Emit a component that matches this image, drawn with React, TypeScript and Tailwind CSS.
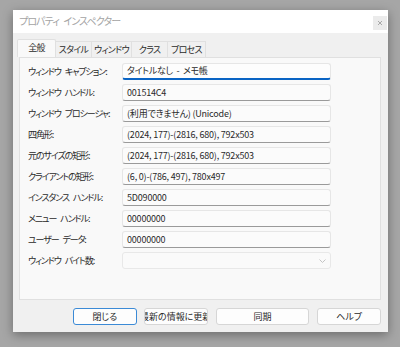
import React from "react";

const rows: { label: string; value: string; focus?: boolean; combo?: boolean }[] = [
  { label: "ウィンドウ キャプション:", value: "タイトルなし - メモ帳", focus: true },
  { label: "ウィンドウ ハンドル:", value: "001514C4" },
  { label: "ウィンドウ プロシージャ:", value: "(利用できません) (Unicode)" },
  { label: "四角形:", value: "(2024, 177)-(2816, 680), 792x503" },
  { label: "元のサイズの矩形:", value: "(2024, 177)-(2816, 680), 792x503" },
  { label: "クライアントの矩形:", value: "(6, 0)-(786, 497), 780x497" },
  { label: "インスタンス ハンドル:", value: "5D090000" },
  { label: "メニュー ハンドル:", value: "00000000" },
  { label: "ユーザー データ:", value: "00000000" },
  { label: "ウィンドウ バイト数:", value: "", combo: true },
];

const font = "font-['Noto_Sans_CJK_JP','Noto_Sans',sans-serif] [font-feature-settings:'palt']";

export default function App() {
  return (
    <div className={`w-[400px] h-[347px] bg-[#a6a6a6] pt-[10px] pl-[13px] overflow-hidden ${font}`}>
      <div className="w-[375px] h-[322px] bg-[#f0f0f0] flex flex-col shadow-[0_3px_10px_rgba(0,0,0,0.35)]">
        {/* title bar */}
        <div className="h-[23px] bg-white flex items-start">
          <div className="flex-1 pl-[6px] pt-[5px] text-[10px] leading-[12px] tracking-[-0.9px] [word-spacing:3px] text-[#a3a3a3]">
            プロパティ インスペクター
          </div>
          <div className="mt-[6px] mr-[1px] w-[14px] h-[14px] bg-[#ebebeb] flex items-center justify-center">
            <svg width="6" height="6" viewBox="0 0 6 6">
              <path d="M1 1L5 5M5 1L1 5" stroke="#a8a8a8" strokeWidth="1" />
            </svg>
          </div>
        </div>

        {/* body */}
        <div className="flex-1 flex flex-col pt-[8px] pl-[6px] pr-[7px] pb-[7px]">
          {/* tabs */}
          <div className="flex items-end h-[16px] ml-[-2px] relative z-10 text-[9px] tracking-[-0.7px] text-[#2a2a2a]">
            <div className="w-[39px] h-[18px] bg-[#f9f9f9] border border-b-0 border-[#e0e0e0] rounded-t-[2px] flex items-center justify-center pb-[1px]">
              全般
            </div>
            <div className="w-[36px] h-[16px] border-t border-r border-[#e0e0e0] flex items-center justify-center">
              スタイル
            </div>
            <div className="w-[40px] h-[16px] border-t border-r border-[#e0e0e0] flex items-center justify-center">
              ウィンドウ
            </div>
            <div className="w-[36px] h-[16px] border-t border-r border-[#e0e0e0] flex items-center justify-center">
              クラス
            </div>
            <div className="w-[38px] h-[16px] border-t border-r border-[#e0e0e0] flex items-center justify-center">
              プロセス
            </div>
          </div>

          {/* panel */}
          <div className="h-[243px] bg-[#f9f9f9] border border-[#e0e0e0] pt-[5px] pl-[8px]">
            {rows.map((r, i) => (
              <div key={i} className="flex items-center h-[17px] mb-[4px] text-[9px] text-[#2a2a2a]">
                <div className="w-[94px] whitespace-nowrap tracking-[-1.1px] [word-spacing:3px]">{r.label}</div>
                {r.combo ? (
                  <div className="w-[209px] h-[17px] bg-[#fafafa] border border-[#e8e8e8] rounded-[3px] flex items-center justify-end pr-[4px]">
                    <svg width="7" height="4" viewBox="0 0 7 4">
                      <path d="M0.5 0.5L3.5 3.5L6.5 0.5" stroke="#c4c4c4" fill="none" strokeWidth="1" />
                    </svg>
                  </div>
                ) : (
                  <div
                    className={
                      r.focus
                        ? "w-[209px] h-[17px] bg-[#fdfdfd] border border-[#e6e6e6] border-b-[2px] border-b-[#0a64c4] rounded-[3px] flex items-center px-[4px] whitespace-nowrap overflow-hidden tracking-[-0.3px] [word-spacing:2px]"
                        : "w-[209px] h-[17px] bg-[#fbfbfb] border border-[#e6e6e6] border-b-[#9a9a9a] rounded-[3px] flex items-center px-[4px] whitespace-nowrap overflow-hidden tracking-[-0.2px]"
                    }
                  >
                    {r.value}
                  </div>
                )}
              </div>
            ))}
          </div>

          {/* buttons */}
          <div className="mt-[8px] flex text-[9px] text-[#2a2a2a] pl-[54px]">
            <div className="w-[64px] h-[17px] bg-[#fdfdfd] border border-[#3b8ad6] rounded-[3px] flex items-center justify-center">
              閉じる
            </div>
            <div className="ml-[7px] w-[64px] h-[17px] bg-[#fdfdfd] border border-[#d6d6d6] rounded-[3px] flex items-center justify-center overflow-hidden whitespace-nowrap">
              <span className="shrink-0">最新の情報に更新</span>
            </div>
            <div className="ml-[8px] w-[94px] h-[17px] bg-[#fdfdfd] border border-[#d6d6d6] rounded-[3px] flex items-center justify-center">
              同期
            </div>
            <div className="ml-[8px] w-[64px] h-[17px] bg-[#fdfdfd] border border-[#d6d6d6] rounded-[3px] flex items-center justify-center">
              ヘルプ
            </div>
          </div>
        </div>
      </div>
    </div>
  );
}
